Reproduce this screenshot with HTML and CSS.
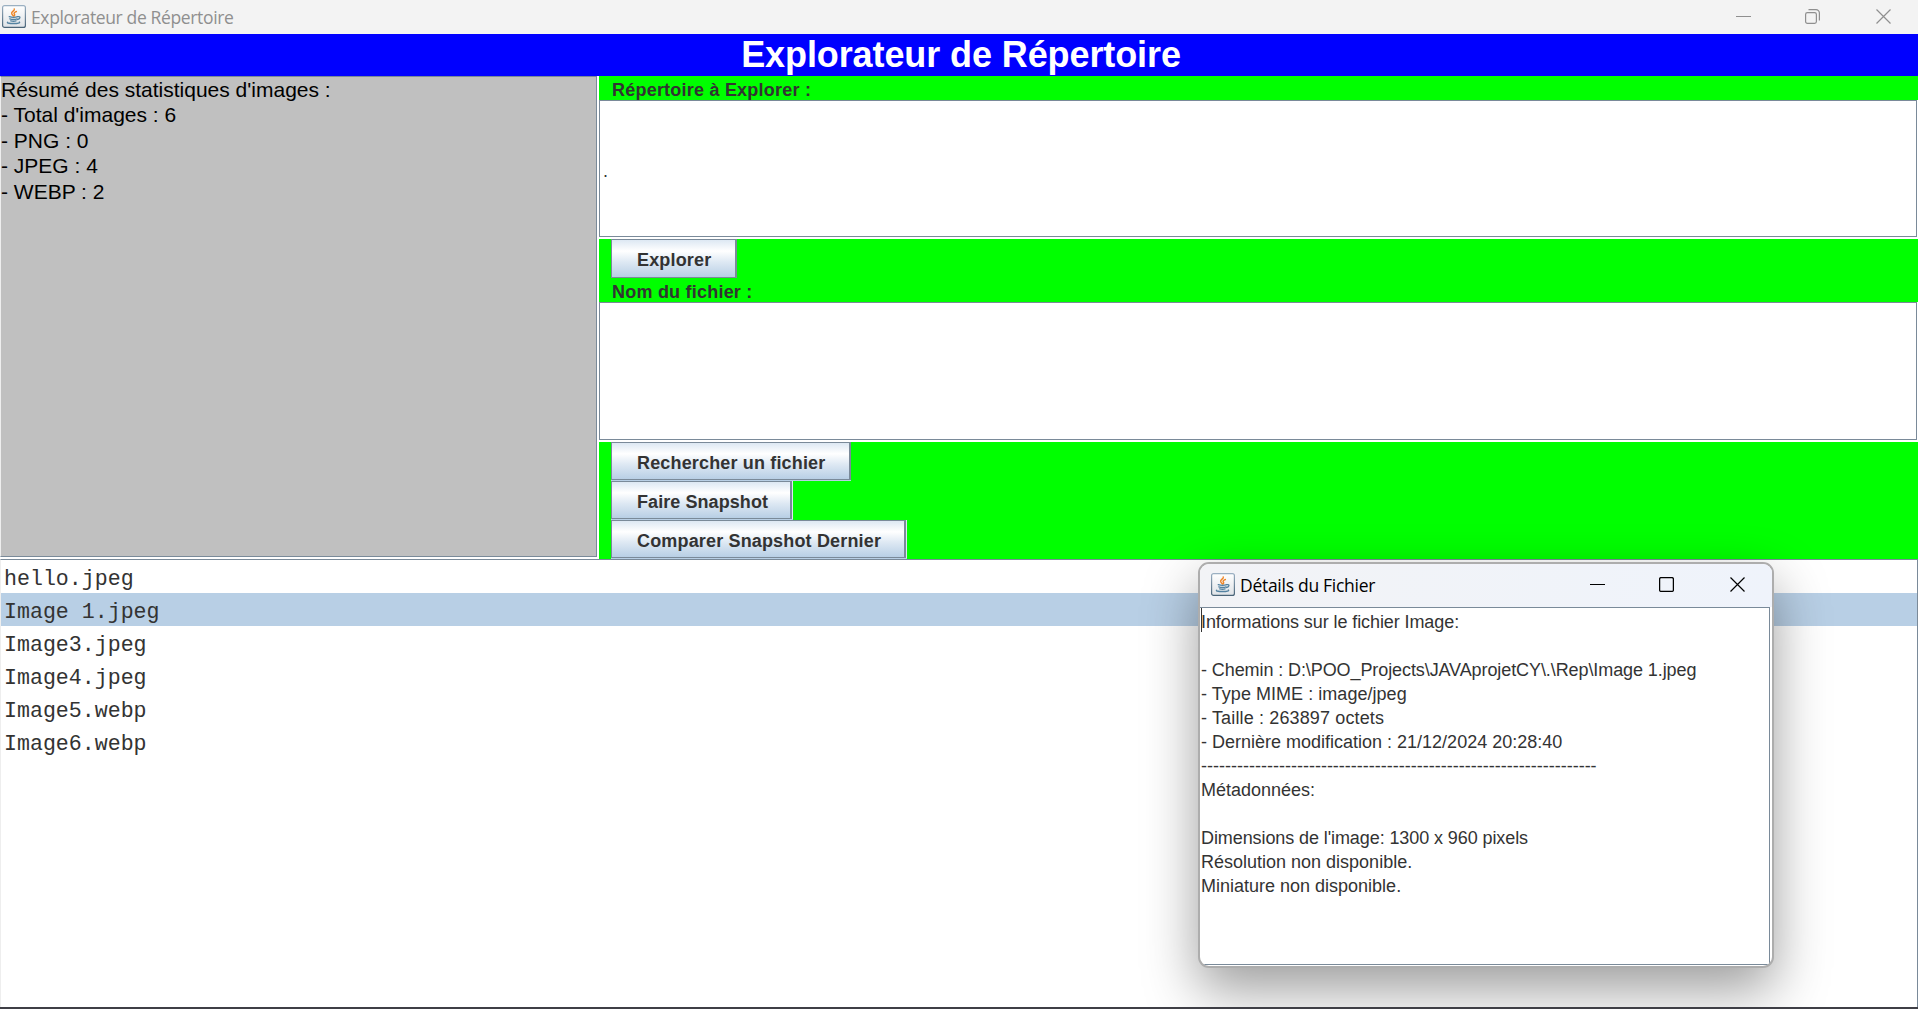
FILE: index.html
```
<!DOCTYPE html>
<html lang="fr">
<head>
<meta charset="utf-8">
<title>Explorateur de Répertoire</title>
<link rel="stylesheet" href="styles.css">
</head>
<body>
<svg class="defs" width="0" height="0" aria-hidden="true">
  <defs>
    <linearGradient id="tile" x1="0" y1="0" x2="0" y2="1">
      <stop offset="0" stop-color="#fff"/><stop offset="1" stop-color="#dfe3e7"/>
    </linearGradient>
    <linearGradient id="rim" x1="0" y1="0" x2="0" y2="1">
      <stop offset="0" stop-color="#9bb0c2"/><stop offset="1" stop-color="#4a6478"/>
    </linearGradient>
    <symbol id="java" viewBox="0 0 24 23">
      <rect x=".6" y=".6" width="22.8" height="21.8" rx="2" fill="url(#tile)" stroke="url(#rim)" stroke-width="1.2"/>
      <path d="M12.3 4c.8 1.8-3.6 2.6-2.6 4.800.4.9 1.300 1.500 1.800 2.200M14.400 6.500c-2.800 1.100-2.700 1.900-1.900 2.800.5.600.2 1.200-.5 1.800" fill="none" stroke="#ee8526" stroke-width="1.400" stroke-linecap="round"/>
      <path d="M7.200 11.700c2.600.9 6.400.8 8.600 0M7.800 13.800c2.400.8 5 .8 7.300.1M8.700 15.800c1.900.6 3.700.6 5.400 0M16.200 11.600c2.400-.4 2.400 2.100-.6 2.900M5.600 17.200c-1.300 1 3.200 1.400 6.500 1.300 3.500 0 6.600-.8 5.200-1.500" fill="none" stroke="#5382a1" stroke-width="1.300" stroke-linecap="round"/>
    </symbol>
    <symbol id="min" viewBox="0 0 15 15"><path d="M0 7.500h15" fill="none" stroke="currentColor"/></symbol>
    <symbol id="max" viewBox="0 0 15 15"><rect x=".6" y=".6" width="13.800" height="13.800" rx="1.500" fill="none" stroke="currentColor" stroke-width="1.300"/></symbol>
    <symbol id="restore" viewBox="0 0 15 15"><rect x=".6" y="3.600" width="10.800" height="10.800" rx="1.800" fill="none" stroke="currentColor" stroke-width="1.200"/><path d="M3.500.6h7.500a3.400 3.400 0 0 1 3.400 3.400v7.500" fill="none" stroke="currentColor" stroke-width="1.200"/></symbol>
    <symbol id="close" viewBox="0 0 15 15"><path d="M.5.5l14 14M14.500.5l-14 14" fill="none" stroke="currentColor" stroke-width="1.200"/></symbol>
  </defs>
</svg>

<main class="window">
  <header class="titlebar">
    <svg class="app-icon"><use href="#java"/></svg>
    <span class="caption">Explorateur de Répertoire</span>
    <svg class="ctl"><use href="#min"/></svg>
    <svg class="ctl ctl-size"><use href="#restore"/></svg>
    <svg class="ctl"><use href="#close"/></svg>
  </header>
  <h1 class="banner">Explorateur de Répertoire</h1>
  <div class="top">
    <section class="stats">
      <div class="stats-text">Résumé des statistiques d'images :
- Total d'images : 6
- PNG : 0
- JPEG : 4
- WEBP : 2</div>
    </section>
    <section class="form">
      <div class="label">Répertoire à Explorer :</div>
      <div class="field"><div class="field-in">.</div></div>
      <button class="btn">Explorer</button>
      <div class="label">Nom du fichier :</div>
      <div class="field tall"><div class="field-in"></div></div>
      <button class="btn wide-search">Rechercher un fichier</button>
      <button class="btn wide-snap">Faire Snapshot</button>
      <button class="btn wide-compare">Comparer Snapshot Dernier</button>
    </section>
  </div>
  <ul class="files">
    <li>hello.jpeg</li>
    <li class="selected">Image 1.jpeg</li>
    <li>Image3.jpeg</li>
    <li>Image4.jpeg</li>
    <li>Image5.webp</li>
    <li>Image6.webp</li>
  </ul>
</main>

<aside class="dialog">
  <header class="titlebar dialog-bar">
    <svg class="app-icon"><use href="#java"/></svg>
    <span class="caption">Détails du Fichier</span>
    <svg class="ctl"><use href="#min"/></svg>
    <svg class="ctl ctl-size"><use href="#max"/></svg>
    <svg class="ctl"><use href="#close"/></svg>
  </header>
  <div class="details">
    <p class="tight">Informations sur le fichier Image:</p>
    <p></p>
    <p class="tight">- Chemin : D:\POO_Projects\JAVAprojetCY\.\Rep\Image 1.jpeg</p>
    <p class="loose">- Type MIME : image/jpeg</p>
    <p class="looser">- Taille : 263897 octets</p>
    <p>- Dernière modification : 21/12/2024 20:28:40</p>
    <p>------------------------------------------------------------------</p>
    <p>Métadonnées:</p>
    <p></p>
    <p class="tight">Dimensions de l'image: 1300 x 960 pixels</p>
    <p>Résolution non disponible.</p>
    <p>Miniature non disponible.</p>
  </div>
</aside>
</body>
</html>
```
FILE: styles.css
```
* { box-sizing: border-box; }
body {
  margin: 0;
  height: 1009px;
  overflow: hidden;
  position: relative;
  background: #fff;
  color: #333;
  font: 18px "Liberation Sans", Arial, sans-serif;
}
.defs { position: absolute; }
.window {
  height: 1009px;
  display: flex;
  flex-direction: column;
  border-bottom: 2px solid #3f3f46;
}

.titlebar {
  flex: none;
  height: 34px;
  display: flex;
  align-items: center;
  padding: 0 27px 0 2px;
  background: #f3f3f3;
  color: #8f8f8f;
}
.app-icon { width: 24px; height: 23px; flex: none; margin-top: -1px; }
.caption {
  flex: 1;
  margin-left: 4px;
  padding-left: 1px;
  font: 17.5px/32px "Open Sans", "Noto Sans", sans-serif;
  letter-spacing: -0.36px;
}
.ctl { width: 15px; height: 15px; flex: none; margin-top: -1px; }
.ctl-size { margin: -1px 56px 0 54px; }

.banner {
  flex: none;
  margin: 0;
  height: 42px;
  background: #00f;
  color: #fff;
  text-align: center;
  font-size: 36px;
  line-height: 42px;
  letter-spacing: -0.1px;
  padding-left: 4px;
}

.top { flex: none; height: 483px; display: flex; }
.stats {
  width: 599px;
  padding: 0 2px 2px 0;
  background: #fff;
}
.stats-text {
  height: 481px;
  background: #c0c0c0;
  border: 1px solid #7a8a99;
  border-left-color: #eee;
  color: #000;
  font-size: 21px;
  line-height: 25.4px;
  white-space: pre;
}

.form {
  flex: 1;
  display: flex;
  flex-direction: column;
  align-items: flex-start;
  background: #0f0;
}
.label {
  height: 24px;
  line-height: 24px;
  padding: 2px 0 0 13px;
  font-weight: bold;
  letter-spacing: 0.22px;
}
.field {
  align-self: stretch;
  height: 139px;
  padding: 0 1px 2px 0;
  background: #fff;
}
.field.tall { height: 140px; }
.field-in {
  height: 100%;
  border: 1px solid #7a8a99;
  display: flex;
  align-items: center;
  padding: 6px 0 0 3px;
}
.btn {
  width: 126px;
  height: 39px;
  margin: 0 0 0 12px;
  padding: 4px 0 0 25px;
  border: 1px solid #7a8a99;
  border-right-width: 2px;
  background: linear-gradient(#dde8f3, #fff 30%, #dde8f3 60%, #b8cfe5);
  color: #333;
  font: bold 18px "Liberation Sans", Arial, sans-serif;
  letter-spacing: 0.16px;
  text-align: left;
  white-space: nowrap;
}
.wide-search, .wide-snap, .wide-compare { height: 38px; margin-bottom: 1px; }
.wide-search { width: 240px; box-shadow: 0 1px #b8cfe5; }
.wide-snap { width: 181px; letter-spacing: 0.07px; box-shadow: 1px 0 #dde8f3, 0 1px #b8cfe5, 1px 1px #b8cfe5; }
.wide-compare { width: 295px; box-shadow: 1px 0 #dde8f3, 0 1px #b8cfe5, 1px 1px #b8cfe5; }

.files {
  flex: 1;
  margin: 0;
  padding: 0;
  list-style: none;
  border: 1px solid #7a8a99;
  border-left-color: #eee;
  border-bottom: 0;
  font: 21.6px/28px "Liberation Mono", "Courier New", monospace;
}
.files li { height: 33px; padding: 5px 0 0 3px; }
.files .selected { background: #b8cfe5; }

.dialog {
  position: absolute;
  left: 1198px;
  top: 562px;
  width: 576px;
  height: 406px;
  display: flex;
  flex-direction: column;
  overflow: hidden;
  border: 2px solid #adadad;
  border-radius: 11px;
  background: #fff;
  box-shadow: 0 22px 54px rgba(0, 0, 0, 0.39);
  clip-path: inset(-100px -100px -39px -100px);
}
.dialog-bar {
  height: 43px;
  padding-left: 11px;
  background: linear-gradient(90deg, #f2f3f6, #eff3fb);
  color: #000;
}
.dialog-bar .app-icon, .dialog-bar .ctl { margin-top: -3px; }
.dialog-bar .caption { margin-left: 5px; padding: 0 0 2px; letter-spacing: -0.28px; }
.details {
  flex: 1;
  margin: 0 2px 1px 0;
  padding: 2px 0 0 1px;
  border: 1px solid #7a8a99;
  border-left: 0;
  line-height: 24px;
  background: linear-gradient(#333, #333) 1px 0 / 1px 24px no-repeat;
}
.details p { height: 24px; margin: 0; white-space: nowrap; }
.details .tight { letter-spacing: -0.09px; }
.details .loose { letter-spacing: 0.04px; }
.details .looser { letter-spacing: 0.14px; }
```
